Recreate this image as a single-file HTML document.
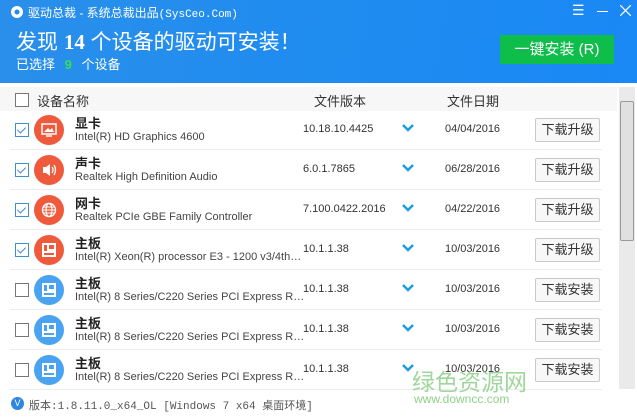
<!DOCTYPE html>
<html><head><meta charset="utf-8"><style>
*{margin:0;padding:0;box-sizing:border-box}
body{width:637px;height:417px;overflow:hidden;background:#fff;font-family:"Liberation Sans","Noto Sans CJK SC",sans-serif;position:relative;color:#333}
.hd{position:absolute;left:0;top:0;width:637px;height:83px;background:linear-gradient(100deg,#2a8fea 0%,#1f8cf0 50%,#1a88f5 100%)}
.t{position:absolute;color:#fff;white-space:nowrap}
.btn1{position:absolute;left:500px;top:35px;width:114px;height:29px;background:#0fbd4a;color:#fff;font-size:15px;text-align:center;line-height:29px}
.th{position:absolute;left:0;top:87px;width:617px;height:24px;background:#f7f7f7;font-size:13px}
.cb{position:absolute;width:14px;height:14px;border:1px solid #777;background:#fff}
.cb.on{border-color:#3b8fd8}
.cb.on:after{content:"";position:absolute;left:3px;top:1px;width:4px;height:7px;border:solid #3b8fd8;border-width:0 1.5px 1.5px 0;transform:rotate(45deg)}
.row{position:absolute;left:0;width:612px;height:40px}
.row .sep{position:absolute;left:10px;right:10px;bottom:0;height:1px;background:#ececec}
.ic{position:absolute;left:34px;top:5px;width:30px;height:30px;border-radius:50%}
.ic svg{position:absolute;left:7px;top:7px}
.ti{position:absolute;left:75px;top:3px;font-size:13px;font-weight:bold;color:#222}
.su{position:absolute;left:75px;top:21px;font-size:11px;color:#444;white-space:nowrap}
.ve{position:absolute;left:303px;top:13px;font-size:11px;color:#333}
.chev{position:absolute;left:402px;top:14px}
.da{position:absolute;left:445px;top:13px;font-size:11px;color:#333}
.bt{position:absolute;left:535px;top:8px;width:65px;height:24px;border:1px solid #c9c9c9;border-radius:2px;background:#f8f8f8;font-size:13px;text-align:center;line-height:22px;color:#333}
</style></head><body>
<div class="hd"></div>
<svg style="position:absolute;left:10px;top:5px" width="14" height="14" viewBox="0 0 14 14"><circle cx="7" cy="7" r="6" fill="#fff"/><circle cx="7" cy="7" r="2.5" fill="#1f8cf0"/></svg>
<div class="t" style="left:28px;top:4px;font-size:12px">驱动总裁 - 系统总裁出品<span style="font-family:'Liberation Mono',monospace;font-size:11px">(SysCeo.Com)</span></div>
<div class="t" style="left:16px;top:26px;font-size:21px">发现 <b style="font-family:'Liberation Serif',serif">14</b> 个设备的驱动可安装！</div>
<div class="t" style="left:16px;top:54px;font-size:13px">已选择 <b style="color:#2fe05a;margin:0 6px">9</b> 个设备</div>
<div class="t" style="left:572px;top:2px;font-size:14px">☰</div>
<div style="position:absolute;left:597px;top:11px;width:11px;height:1px;background:#fff"></div>
<svg style="position:absolute;left:620px;top:5px" width="11" height="11"><path d="M0 0L11 11M11 0L0 11" stroke="#fff" stroke-width="1.2"/></svg>
<div class="btn1">一键安装 (R)</div>
<div class="th"><div class="cb" style="left:15px;top:6px"></div><span style="position:absolute;left:37px;top:4px">设备名称</span><span style="position:absolute;left:314px;top:4px">文件版本</span><span style="position:absolute;left:447px;top:4px">文件日期</span></div>
<div style="position:absolute;left:619px;top:87px;width:16px;height:302px;background:#eaeaea"><div style="position:absolute;left:1px;top:14px;width:14px;height:140px;background:#e0e0e0;border:1px solid #999;border-radius:2px"></div></div>

<div class="row" style="top:110px"><div class="cb on" style="left:15px;top:13px"></div><div class="ic" style="background:#f05a3c"><svg width="16" height="16"><rect x="1" y="2" width="14" height="10" fill="none" stroke="#fff" stroke-width="1.5"/><path d="M3 10L7 6L9 8L11 6L13 10Z" fill="#fff"/><path d="M5 14H11" stroke="#fff" stroke-width="1.5"/></svg></div><div class="ti">显卡</div><div class="su">Intel(R) HD Graphics 4600</div><div class="ve">10.18.10.4425</div><svg class="chev" width="12" height="8"><path d="M1 1L6 6L11 1" stroke="#1f9be0" stroke-width="2.5" fill="none"/></svg><div class="da">04/04/2016</div><div class="bt">下载升级</div><div class="sep"></div></div>
<div class="row" style="top:150px"><div class="cb on" style="left:15px;top:13px"></div><div class="ic" style="background:#f05a3c"><svg width="16" height="16"><path d="M2 5H5L9 2V14L5 11H2Z" fill="#fff"/><path d="M11 5Q13 8 11 11M13 3Q16 8 13 13" stroke="#fff" stroke-width="1.3" fill="none"/></svg></div><div class="ti">声卡</div><div class="su">Realtek High Definition Audio</div><div class="ve">6.0.1.7865</div><svg class="chev" width="12" height="8"><path d="M1 1L6 6L11 1" stroke="#1f9be0" stroke-width="2.5" fill="none"/></svg><div class="da">06/28/2016</div><div class="bt">下载升级</div><div class="sep"></div></div>
<div class="row" style="top:190px"><div class="cb on" style="left:15px;top:13px"></div><div class="ic" style="background:#f05a3c"><svg width="16" height="16"><circle cx="8" cy="8" r="6.5" fill="none" stroke="#fff" stroke-width="1.4"/><ellipse cx="8" cy="8" rx="3" ry="6.5" fill="none" stroke="#fff" stroke-width="1.2"/><path d="M1.5 8H14.5M2.5 5H13.5M2.5 11H13.5" stroke="#fff" stroke-width="1.1"/></svg></div><div class="ti">网卡</div><div class="su">Realtek PCIe GBE Family Controller</div><div class="ve">7.100.0422.2016</div><svg class="chev" width="12" height="8"><path d="M1 1L6 6L11 1" stroke="#1f9be0" stroke-width="2.5" fill="none"/></svg><div class="da">04/22/2016</div><div class="bt">下载升级</div><div class="sep"></div></div>
<div class="row" style="top:230px"><div class="cb on" style="left:15px;top:13px"></div><div class="ic" style="background:#f05a3c"><svg width="16" height="16"><rect x="1" y="1" width="14" height="14" fill="#fff"/><rect x="3" y="3" width="3" height="6" fill="#f05a3c"/><rect x="8" y="3" width="5" height="4" fill="#f05a3c"/><rect x="3" y="11" width="10" height="2" fill="#f05a3c"/></svg></div><div class="ti">主板</div><div class="su">Intel(R) Xeon(R) processor E3 - 1200 v3/4th…</div><div class="ve">10.1.1.38</div><svg class="chev" width="12" height="8"><path d="M1 1L6 6L11 1" stroke="#1f9be0" stroke-width="2.5" fill="none"/></svg><div class="da">10/03/2016</div><div class="bt">下载升级</div><div class="sep"></div></div>
<div class="row" style="top:270px"><div class="cb" style="left:15px;top:13px"></div><div class="ic" style="background:#4aa3f0"><svg width="16" height="16"><rect x="1" y="1" width="14" height="14" fill="#fff"/><rect x="3" y="3" width="3" height="6" fill="#4aa3f0"/><rect x="8" y="3" width="5" height="4" fill="#4aa3f0"/><rect x="3" y="11" width="10" height="2" fill="#4aa3f0"/></svg></div><div class="ti">主板</div><div class="su">Intel(R) 8 Series/C220 Series PCI Express R…</div><div class="ve">10.1.1.38</div><svg class="chev" width="12" height="8"><path d="M1 1L6 6L11 1" stroke="#1f9be0" stroke-width="2.5" fill="none"/></svg><div class="da">10/03/2016</div><div class="bt">下载安装</div><div class="sep"></div></div>
<div class="row" style="top:310px"><div class="cb" style="left:15px;top:13px"></div><div class="ic" style="background:#4aa3f0"><svg width="16" height="16"><rect x="1" y="1" width="14" height="14" fill="#fff"/><rect x="3" y="3" width="3" height="6" fill="#4aa3f0"/><rect x="8" y="3" width="5" height="4" fill="#4aa3f0"/><rect x="3" y="11" width="10" height="2" fill="#4aa3f0"/></svg></div><div class="ti">主板</div><div class="su">Intel(R) 8 Series/C220 Series PCI Express R…</div><div class="ve">10.1.1.38</div><svg class="chev" width="12" height="8"><path d="M1 1L6 6L11 1" stroke="#1f9be0" stroke-width="2.5" fill="none"/></svg><div class="da">10/03/2016</div><div class="bt">下载安装</div><div class="sep"></div></div>
<div class="row" style="top:350px"><div class="cb" style="left:15px;top:13px"></div><div class="ic" style="background:#4aa3f0"><svg width="16" height="16"><rect x="1" y="1" width="14" height="14" fill="#fff"/><rect x="3" y="3" width="3" height="6" fill="#4aa3f0"/><rect x="8" y="3" width="5" height="4" fill="#4aa3f0"/><rect x="3" y="11" width="10" height="2" fill="#4aa3f0"/></svg></div><div class="ti">主板</div><div class="su">Intel(R) 8 Series/C220 Series PCI Express R…</div><div class="ve">10.1.1.38</div><svg class="chev" width="12" height="8"><path d="M1 1L6 6L11 1" stroke="#1f9be0" stroke-width="2.5" fill="none"/></svg><div class="da">10/03/2016</div><div class="bt">下载安装</div><div class="sep"></div></div>

<div style="position:absolute;left:412px;top:363px;font-size:23px;color:#8fd08a;opacity:.85">绿色资源网</div>
<div style="position:absolute;left:414px;top:392px;font-size:12px;color:#8fd08a">www.downcc.com</div>
<div style="position:absolute;left:11px;top:397px;width:13px;height:13px;border-radius:50%;background:#2f86e0;color:#fff;font-size:9px;text-align:center;line-height:13px">V</div>
<div style="position:absolute;left:29px;top:397px;font-size:11px;color:#555;font-family:'Liberation Mono','Noto Sans CJK SC',monospace">版本:1.8.11.0_x64_OL [Windows 7 x64 桌面环境]</div>
</body></html>
